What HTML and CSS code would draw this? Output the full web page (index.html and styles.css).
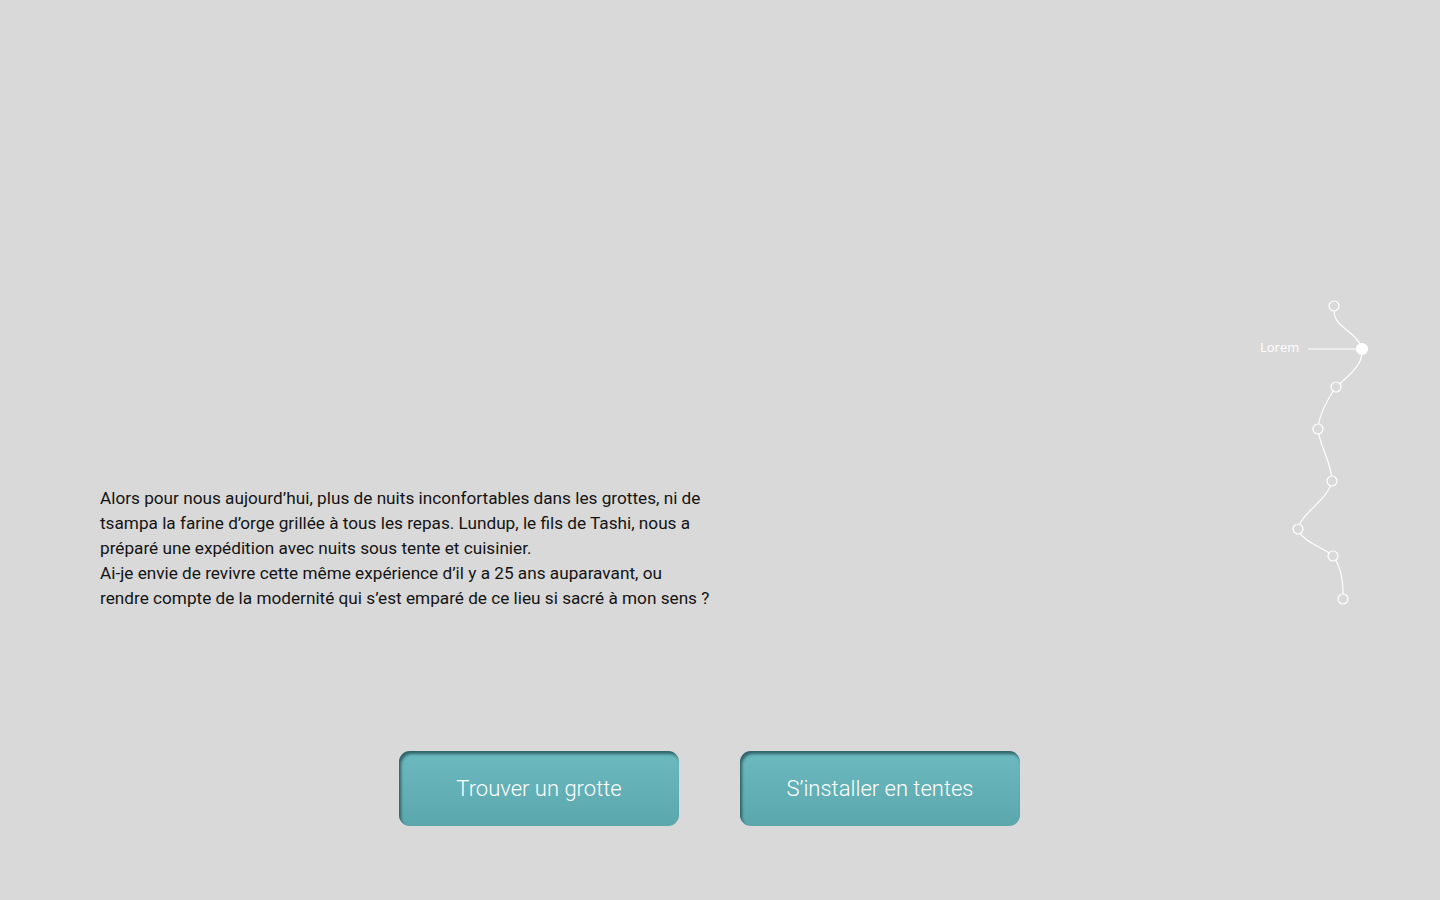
FILE: index.html
```html
<!DOCTYPE html>
<html lang="fr">
<head>
<meta charset="utf-8">
<title>Expédition</title>
<link rel="stylesheet" href="styles.css">
</head>
<body>
<main class="page">
  <p class="story">Alors pour nous aujourd’hui, plus de nuits inconfortables dans les grottes, ni de<br>tsampa la farine d’orge grillée à tous les repas. Lundup, le fils de Tashi, nous a<br>préparé une expédition avec nuits sous tente et cuisinier.<br>Ai-je envie de revivre cette même expérience d’il y a 25 ans auparavant, ou<br>rendre compte de la modernité qui s’est emparé de ce lieu si sacré à mon sens ?</p>
  <div class="choices">
    <button class="choice">Trouver un grotte</button>
    <button class="choice">S’installer en tentes</button>
  </div>
</main>
<nav class="trail">
  <svg width="150" height="320" viewBox="0 0 150 320" fill="none" stroke="#ffffff" stroke-width="1.2">
    <path d="M94,21 C94,38 118,42 122,59 C124,75 106,88 96,97 C88,108 79,125 78,139 C80,158 91,170 92,191 C88,210 62,222 58,239 C62,252 85,258 93,266 C100,275 103,290 103,304"/>
    <line x1="68" y1="59" x2="122" y2="59"/>
    <circle cx="94" cy="16" r="5" fill="#d9d9d9"/>
    <circle cx="122" cy="59" r="5.5" fill="#ffffff"/>
    <circle cx="96" cy="97" r="5" fill="#d9d9d9"/>
    <circle cx="78" cy="139" r="5" fill="#d9d9d9"/>
    <circle cx="92" cy="191" r="5" fill="#d9d9d9"/>
    <circle cx="58" cy="239" r="5" fill="#d9d9d9"/>
    <circle cx="93" cy="266" r="5" fill="#d9d9d9"/>
    <circle cx="103" cy="309" r="5" fill="#d9d9d9"/>
  </svg>
  <span class="trail-label">Lorem</span>
</nav>
</body>
</html>
```

FILE: styles.css
```css
html, body {
  margin: 0;
  padding: 0;
}
body {
  width: 1440px;
  height: 900px;
  background: #d9d9d9;
  font-family: Roboto, "Noto Sans", sans-serif;
  color: #141414;
  position: relative;
  overflow: hidden;
}
.page {
  display: flex;
  flex-direction: column;
  padding-top: 486px;
}
.story {
  margin: 0 0 0 100px;
  font-size: 17.2px;
  line-height: 25px;
}
.choices {
  display: flex;
  gap: 61px;
  margin: 140px 0 0 399px;
}
.choice {
  width: 280px;
  height: 75px;
  border: none;
  border-radius: 11px;
  background: linear-gradient(#6cb9c0, #5aa7ad);
  box-shadow: inset 2px 3px 3px rgba(30, 70, 75, 0.75);
  color: #ffffff;
  font-family: Roboto, "Noto Sans", sans-serif;
  font-weight: 300;
  font-size: 22px;
  padding: 0;
  cursor: pointer;
}
.trail {
  position: absolute;
  left: 1240px;
  top: 290px;
  width: 150px;
  height: 320px;
}
.trail svg {
  display: block;
}
.trail-label {
  position: absolute;
  left: 20px;
  top: 48px;
  font-family: "Open Sans", sans-serif;
  font-size: 13px;
  color: #ffffff;
}
```
